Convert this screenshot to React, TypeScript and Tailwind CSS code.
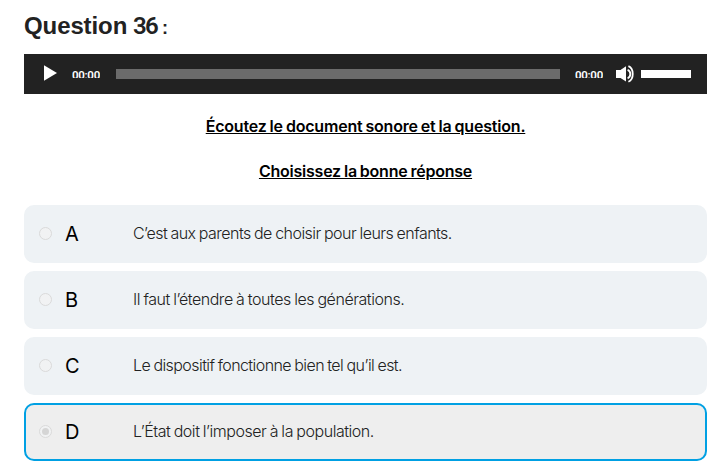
const answers = [
  { letter: "A", text: "C’est aux parents de choisir pour leurs enfants.", spacing: "tracking-[-0.53px]" },
  { letter: "B", text: "Il faut l’étendre à toutes les générations.", spacing: "tracking-[-0.45px]" },
  { letter: "C", text: "Le dispositif fonctionne bien tel qu’il est.", spacing: "tracking-[-0.57px]" },
  { letter: "D", text: "L’État doit l’imposer à la population.", spacing: "tracking-[-0.46px]", selected: true },
];

function Time() {
  return (
    <span className="mt-4 block h-2 w-7 overflow-hidden whitespace-nowrap font-['Roboto',sans-serif] text-[11.5px] font-semibold leading-[11px] tracking-[-0.3px] text-white">
      00:00
    </span>
  );
}

function Player() {
  return (
    <div className="mt-[10px] flex h-10 bg-[#222] pl-5 pr-4">
      <svg className="mt-[11px] h-4 w-[13px]" viewBox="0 0 13 16" fill="#fff">
        <path d="M0 0.2 13 8 0 15.8Z" />
      </svg>
      <div className="ml-[15px] flex">
        <Time />
      </div>
      <div className="ml-4 mt-[15px] h-[10px] w-[444px] bg-[#6b6b6b]" />
      <div className="ml-[15px] flex">
        <Time />
      </div>
      <svg className="ml-[13px] mt-[11px] h-[18px] w-[18px]" viewBox="0 0 18 18" fill="#fff">
        <path d="M0 5h4.5L10 1.2v15.4L4.5 13H0Z" />
        <path d="M11.6 4.8c3.6 1.5 3.6 7 0 8.5M12.4 1.2c5.8 2.5 5.8 13 0 15.6" fill="none" stroke="#fff" strokeWidth="1.8" />
      </svg>
      <div className="ml-[7px] mt-4 h-2 w-[50px] bg-white" />
    </div>
  );
}

export default function App() {
  return (
    <main className="h-[475px] w-[720px] overflow-hidden bg-white pl-6 pr-[13px] pt-2 font-['Inter',sans-serif]">
      <h1 className="flex h-9 items-baseline whitespace-nowrap font-['Liberation_Sans',sans-serif] text-2xl font-bold leading-9 text-[#222]">
        <span className="w-[109px] tracking-[-0.1px]">Question</span>
        <span className="w-[29px] font-['Roboto',sans-serif] font-semibold tracking-[-1.8px]">36</span>
        <span className="text-lg">:</span>
      </h1>
      <Player />
      <div className="flex flex-col items-center pt-5 text-base font-semibold leading-6 text-black">
        <p className="whitespace-nowrap tracking-[-0.2px] underline [word-spacing:-0.8px]">Écoutez le document sonore et la question.</p>
        <p className="mt-[21px] whitespace-nowrap tracking-[-0.23px] underline [word-spacing:-0.8px]">Choisissez la bonne réponse</p>
      </div>
      <div className="mt-[22px] flex flex-col gap-2">
        {answers.map((a) => (
          <label
            key={a.letter}
            className={`flex h-[58px] items-center rounded-[10px] border-2 pl-[13px] ${a.selected ? "border-[#00a0e3] bg-[#eee]" : "border-[#eef2f5] bg-[#eef2f5]"}`}
          >
            <span className="-mt-px flex size-[13px] items-center justify-center rounded-full border border-[#dadada] bg-[#f1f2f3]">
              {a.selected && <span className="size-[7px] rounded-full bg-[#d5d5d5]" />}
            </span>
            <span className="ml-[13px] w-[68px] pb-px text-xl text-black">{a.letter}</span>
            <span className={`whitespace-nowrap pb-0.5 text-base font-light text-[#222] [word-spacing:-0.7px] ${a.spacing}`}>{a.text}</span>
          </label>
        ))}
      </div>
    </main>
  );
}
